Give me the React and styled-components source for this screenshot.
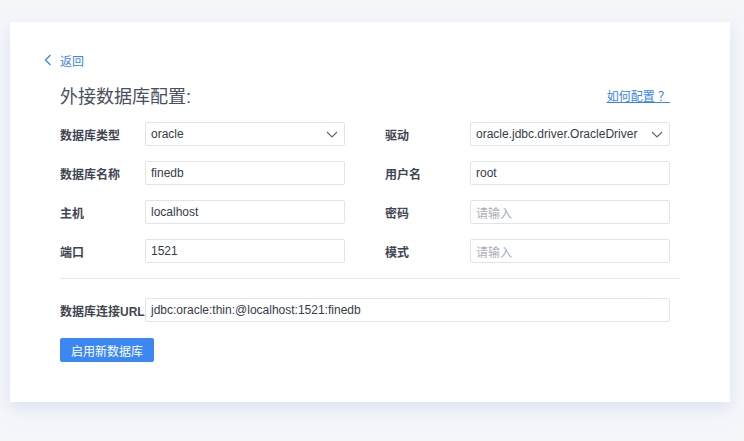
import React from "react";
import styled, { createGlobalStyle } from "styled-components";

const GlobalStyle = createGlobalStyle`
  body {
    margin: 0;
    background: #f4f6fa;
    font-family: "Liberation Sans", "Noto Sans CJK SC", sans-serif;
  }
`;

// page wrapper
const Page = styled.div`
  padding: 22px 14px 39px 10px;
`;

const Card = styled.div`
  width: 720px;
  box-sizing: border-box;
  background: #fff;
  padding: 30px 50px 40px;
  box-shadow: 0 6px 14px rgba(200, 212, 232, 0.55);
`;

// back link
const Back = styled.a`
  display: flex;
  align-items: center;
  gap: 8px;
  height: 16px;
  margin-left: -16px;
  font-size: 12px;
  color: #3b86e8;
  cursor: pointer;
`;

const TitleRow = styled.div`
  display: flex;
  align-items: center;
  justify-content: space-between;
  width: 610px;
  height: 24px;
  margin-top: 15px;
`;

const Title = styled.h2`
  margin: 0;
  font-size: 18px;
  font-weight: 400;
  color: #4a505c;
`;

const HelpLink = styled.a`
  font-size: 12px;
  color: #3b86e8;
  text-decoration: underline;
  cursor: pointer;
`;

// form grid
const FormGrid = styled.div`
  display: grid;
  grid-template-columns: 85px 200px 125px 200px;
  row-gap: 15px;
  margin-top: 15px;
  width: 610px;
`;

const Label = styled.label`
  display: flex;
  align-items: center;
  height: 24px;
  padding-left: ${(p) => (p.indent ? "40px" : "0")};
  width: ${(p) => p.width || "auto"};
  font-size: 12px;
  font-weight: 700;
  color: #3f4652;
  white-space: nowrap;
`;

const Field = styled.div`
  position: relative;
  display: flex;
  align-items: center;
  height: 24px;
  box-sizing: border-box;
  border: 1px solid #e1e4ea;
  border-radius: 2px;
  padding: 0 28px 0 5px;
  font-size: 12px;
  color: ${(p) => (p.$placeholder ? "#a9aeb7" : "#343c4a")};
  background: #fff;
  white-space: nowrap;
  overflow: hidden;
  width: ${(p) => p.width || "auto"};
`;

const Arrow = styled.svg`
  position: absolute;
  right: 6px;
  top: 8px;
`;

const Divider = styled.div`
  width: 620px;
  height: 1px;
  background: #e6e8ec;
  margin: 15px 0 19px;
`;

const UrlRow = styled.div`
  display: flex;
  align-items: center;
`;

const Button = styled.button`
  display: block;
  margin-top: 16px;
  height: 24px;
  padding: 0 11px;
  border: none;
  border-radius: 2px;
  background: #3c88f2;
  color: #fff;
  font-family: inherit;
  font-size: 12px;
  cursor: pointer;
`;

function ChevronLeft() {
  return (
    <svg width="8" height="12" viewBox="0 0 8 12">
      <path d="M6.5 1 L1.5 6 L6.5 11" fill="none" stroke="#3b86e8" strokeWidth="1.3" />
    </svg>
  );
}

function Select({ value }) {
  return (
    <Field>
      {value}
      <Arrow width="12" height="7" viewBox="0 0 12 7">
        <path d="M1 1 L6 6 L11 1" fill="none" stroke="#5f6673" strokeWidth="1.1" />
      </Arrow>
    </Field>
  );
}

const rows = [
  ["数据库类型", { select: "oracle" }, "驱动", { select: "oracle.jdbc.driver.OracleDriver" }],
  ["数据库名称", { value: "finedb" }, "用户名", { value: "root" }],
  ["主机", { value: "localhost" }, "密码", { ph: "请输入" }],
  ["端口", { value: "1521" }, "模式", { ph: "请输入" }],
];

function renderField(f) {
  if (f.select) return <Select value={f.select} />;
  if (f.ph) return <Field $placeholder>{f.ph}</Field>;
  return <Field>{f.value}</Field>;
}

export default function App() {
  return (
    <Page>
      <GlobalStyle />
      <Card>
        <Back>
          <ChevronLeft />
          返回
        </Back>
        <TitleRow>
          <Title>外接数据库配置:</Title>
          <HelpLink>如何配置 ？</HelpLink>
        </TitleRow>
        <FormGrid>
          {rows.map((r) => (
            <React.Fragment key={r[0]}>
              <Label>{r[0]}</Label>
              {renderField(r[1])}
              <Label indent>{r[2]}</Label>
              {renderField(r[3])}
            </React.Fragment>
          ))}
        </FormGrid>
        <Divider />
        <UrlRow>
          <Label width="85px">数据库连接URL</Label>
          <Field width="525px">jdbc:oracle:thin:@localhost:1521:finedb</Field>
        </UrlRow>
        <Button>启用新数据库</Button>
      </Card>
    </Page>
  );
}
